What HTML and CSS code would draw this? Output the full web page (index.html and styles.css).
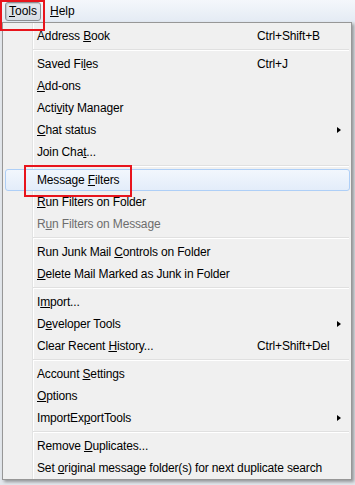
FILE: index.html
```html
<!DOCTYPE html>
<html lang="en">

<head>
    <meta charset="UTF-8">
    <title>Tools menu</title>
    <link rel="stylesheet" href="styles.css">
</head>

<body>
    <div id="menuBar">
        <span class="barItem pressed"><u>T</u>ools</span>
        <span class="barItem"><u>H</u>elp</span>
    </div>

    <div id="toolsMenu">
        <div class="item"><span>Address <u>B</u>ook</span><span class="key">Ctrl+Shift+B</span></div>
        <div class="sep"></div>
        <div class="item"><span>Saved Fi<u>l</u>es</span><span class="key">Ctrl+J</span></div>
        <div class="item"><span><u>A</u>dd-ons</span></div>
        <div class="item"><span>Acti<u>v</u>ity Manager</span></div>
        <div class="item"><span><u>C</u>hat status</span><span class="key"></span><span class="arrow"></span></div>
        <div class="item"><span>Join Cha<u>t</u>...</span></div>
        <div class="sep"></div>
        <div class="item hover"><span>Message <u>F</u>ilters</span></div>
        <div class="item"><span><u>R</u>un Filters on Folder</span></div>
        <div class="item disabled"><span>R<u>u</u>n Filters on Message</span></div>
        <div class="sep"></div>
        <div class="item"><span>Run Junk Mail <u>C</u>ontrols on Folder</span></div>
        <div class="item"><span><u>D</u>elete Mail Marked as Junk in Folder</span></div>
        <div class="sep"></div>
        <div class="item"><span>I<u>m</u>port...</span></div>
        <div class="item"><span>D<u>e</u>veloper Tools</span><span class="key"></span><span class="arrow"></span></div>
        <div class="item"><span>Clear Recent <u>H</u>istory...</span><span class="key">Ctrl+Shift+Del</span></div>
        <div class="sep"></div>
        <div class="item"><span>Account <u>S</u>ettings</span></div>
        <div class="item"><span><u>O</u>ptions</span></div>
        <div class="item"><span>ImportEx<u>p</u>ortTools</span><span class="key"></span><span class="arrow"></span></div>
        <div class="sep"></div>
        <div class="item"><span>Remove <u>D</u>uplicates...</span></div>
        <div class="item"><span>Set <u>o</u>riginal message folder(s) for next duplicate search</span></div>
    </div>

    <div class="callout" id="toolsCallout"></div>
    <div class="callout" id="filtersCallout"></div>
</body>

</html>
```

FILE: styles.css
```css
body {
    margin: 0;
    height: 485px;
    overflow: hidden;
    background-color: #e3e7ec;
    font-family: "Liberation Sans", Arial, sans-serif;
    font-size: 12px;
    color: #000;
}

#menuBar {
    display: flex;
    align-items: center;
    height: 22px;
    padding-left: 5px;
    box-sizing: border-box;
    background: linear-gradient(#f4f7fb, #e4ebf4);
}

.barItem {
    height: 19px;
    line-height: 17px;
    box-sizing: border-box;
    border: 1px solid transparent;
    padding: 0 3px 0 3px;
    margin-top: 1px;
}

.barItem + .barItem {
    margin-left: 5px;
}

.barItem.pressed {
    border-color: #8c8f93;
    border-radius: 3px;
    background: linear-gradient(#e6eaef, #d6dce4);
    box-shadow: inset 1px 1px 1px rgba(0, 0, 0, 0.15);
}

#toolsMenu {
    width: 350px;
    margin-left: 2px;
    box-sizing: border-box;
    border: 1px solid #979797;
    padding: 2px 0 0 0;
    background: linear-gradient(to right, transparent 29px, #e2e3e3 29px, #e2e3e3 30px, #fff 30px, #fff 31px, transparent 31px), #f0f0f0;
    box-shadow: 2px 2px 3px rgba(0, 0, 0, 0.35);
}

.item {
    display: grid;
    grid-template-columns: 220px 1fr 4px;
    align-items: center;
    height: 22px;
    box-sizing: border-box;
    margin: 0 1px 0 2px;
    padding: 0 8px 0 31px;
    border: 1px solid transparent;
    white-space: nowrap;
    letter-spacing: -0.15px;
}

.item.hover {
    border-color: #aecff7;
    border-radius: 3px;
    background: linear-gradient(#f2f7fd, #e3edfa);
}

.item.disabled {
    color: #6d6d6d;
}

.arrow {
    width: 0;
    height: 0;
    border-left: 4px solid #000;
    border-top: 3.5px solid transparent;
    border-bottom: 3.5px solid transparent;
}

.sep {
    height: 6px;
    box-sizing: border-box;
    padding-top: 2px;
}

.sep::before {
    content: "";
    display: block;
    margin: 0 2px 0 30px;
    border-top: 1px solid #e0e0e0;
    border-bottom: 1px solid #fff;
}

.callout {
    position: absolute;
    box-sizing: border-box;
    border: 2px solid #e8141c;
}

#toolsCallout {
    left: 0;
    top: 0;
    width: 45px;
    height: 31px;
}

#filtersCallout {
    left: 24px;
    top: 165px;
    width: 108px;
    height: 32px;
}
```
